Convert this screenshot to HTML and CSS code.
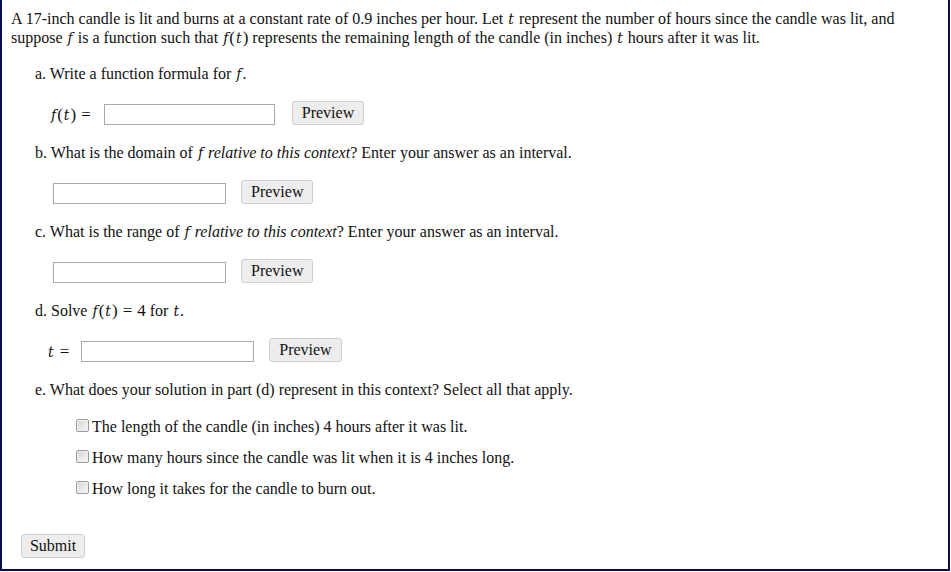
FILE: index.html
```html
<!DOCTYPE html>
<html>
<head>
<meta charset="utf-8">
<link rel="stylesheet" href="styles.css">
</head>
<body>
<div class="frame">
  <p class="intro">A 17-inch candle is lit and burns at a constant rate of 0.9 inches per hour. Let <span class="mi">t</span> represent the number of hours since the candle was lit, and suppose <span class="mi">f</span> is a function such that <span class="math"><span class="mi">f</span>(<span class="mi">t</span>)</span> represents the remaining length of the candle (in inches) <span class="mi">t</span> hours after it was lit.</p>

  <div class="part">
    <p class="q">a. Write a function formula for <span class="mi">f</span>.</p>
    <div class="answer">
      <span class="math lbl lbl-a"><span class="mi">f</span>(<span class="mi">t</span>)<span class="eq">=</span></span>
      <input class="box box-a" type="text">
      <button class="btn preview preview-a">Preview</button>
    </div>
  </div>

  <div class="part">
    <p class="q">b. What is the domain of <span class="mi">f</span> <em>relative to this context</em>? Enter your answer as an interval.</p>
    <div class="answer">
      <input class="box" type="text">
      <button class="btn preview">Preview</button>
    </div>
  </div>

  <div class="part">
    <p class="q">c. What is the range of <span class="mi">f</span> <em>relative to this context</em>? Enter your answer as an interval.</p>
    <div class="answer">
      <input class="box" type="text">
      <button class="btn preview">Preview</button>
    </div>
  </div>

  <div class="part">
    <p class="q">d. Solve <span class="math"><span class="mi">f</span>(<span class="mi">t</span>)<span class="eq">=</span>4</span> for <span class="mi">t</span>.</p>
    <div class="answer">
      <span class="math lbl lbl-d"><span class="mi">t</span><span class="eq">=</span></span>
      <input class="box" type="text">
      <button class="btn preview">Preview</button>
    </div>
  </div>

  <div class="part">
    <p class="q">e. What does your solution in part (d) represent in this context? Select all that apply.</p>
    <ul class="choices">
      <li><label><input type="checkbox" class="cb">The length of the candle (in inches) 4 hours after it was lit.</label></li>
      <li><label><input type="checkbox" class="cb">How many hours since the candle was lit when it is 4 inches long.</label></li>
      <li><label><input type="checkbox" class="cb">How long it takes for the candle to burn out.</label></li>
    </ul>
  </div>

  <div class="submit-row">
    <button class="btn submit">Submit</button>
  </div>
</div>
</body>
</html>
```

FILE: styles.css
```css
html, body {
  margin: 0;
  padding: 0;
  background: #fff;
}
body {
  font-family: "Liberation Serif", "Times New Roman", serif;
  font-size: 16px;
  color: #111;
}
.frame {
  box-sizing: border-box;
  width: 950px;
  height: 571px;
  border-left: 2px solid #0d0d4d;
  border-right: 2px solid #0d0d4d;
  border-bottom: 2px solid #0d0d4d;
  padding: 9px 9px 0 9px;
}
p {
  margin: 0;
}
.intro {
  line-height: 19px;
}
.mi {
  font-style: italic;
  font-family: "DejaVu Serif", serif;
  font-size: 14px;
  line-height: 1;
  padding: 0 1px;
}
.math {
  font-size: 17px;
  line-height: 1;
  white-space: nowrap;
}
.math .eq {
  margin: 0 5px;
}
em {
  font-style: italic;
}
.part {
  margin-left: 24px;
}
.q {
  margin-top: 17px;
  line-height: 19px;
}
.answer {
  display: flex;
  align-items: center;
  margin-top: 19px;
  padding-left: 18px;
  height: 24px;
}
.lbl {
  margin-right: 5px;
}
.lbl-a {
  margin-left: -3px;
  margin-right: 8px;
}
.lbl-d {
  margin-left: -6px;
  margin-right: 7px;
}
.box {
  box-sizing: border-box;
  width: 173px;
  height: 21px;
  border: 1px solid #a9a9a9;
  margin: 0;
  padding: 1px 3px;
  font-family: inherit;
  font-size: 15px;
}
.box-a {
  width: 171px;
}
.btn {
  font-family: "Liberation Serif", "Times New Roman", serif;
  font-size: 16px;
  color: #111;
  background: #ededed;
  border: 1px solid #cfcfcf;
  border-radius: 3px;
  height: 24px;
  padding: 0 9px;
  line-height: 20px;
}
.preview {
  margin-left: 15px;
  margin-top: -2px;
}
.preview-a {
  margin-left: 17px;
}
.choices {
  list-style: none;
  margin: 18px 0 0 0;
  padding: 0 0 0 41px;
}
.choices li {
  height: 31px;
  line-height: 19px;
}
.choices label {
  display: flex;
  align-items: center;
}
.cb {
  -webkit-appearance: none;
  appearance: none;
  box-sizing: border-box;
  width: 13px;
  height: 13px;
  margin: -2px 3px 0 0;
  border: 1px solid #9a9a9a;
  border-radius: 2px;
  background: linear-gradient(135deg, #d4d4d4 0%, #e6e6e6 50%, #f6f6f6 100%);
  box-shadow: inset 0 0 0 1px #f2f2f2;
}
.submit-row {
  margin-top: 24px;
  padding-left: 10px;
}
.submit {
  width: 64px;
  padding: 0;
}
```
